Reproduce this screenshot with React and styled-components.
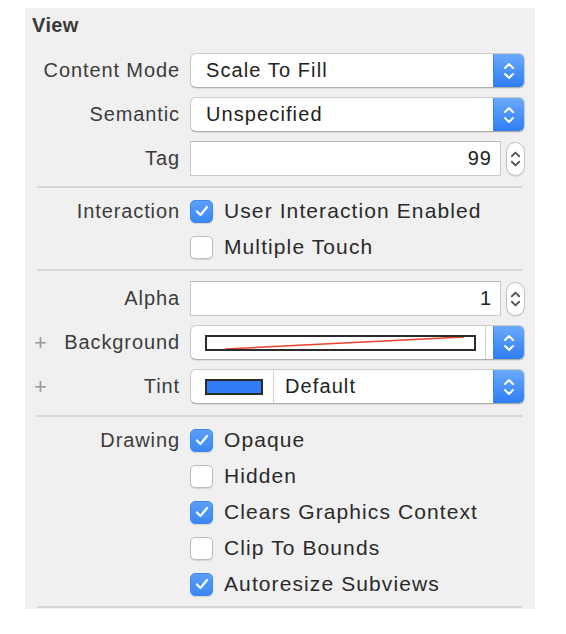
import React from 'react';
import styled, { createGlobalStyle } from 'styled-components';

const GlobalStyle = createGlobalStyle`
  body {
    margin: 0;
    background: #ffffff;
    font-family: "Liberation Sans", Arial, sans-serif;
  }
`;

const Panel = styled.div`
  margin: 8px 0 0 25px;
  width: 510px;
  background-color: #f0f0f0;
  padding-bottom: 1px;
`;

const Title = styled.div`
  padding: 6px 0 0 7px;
  height: 38px;
  box-sizing: border-box;
  font-size: 20px;
  font-weight: 700;
  color: #3a3a3a;
  letter-spacing: 0.4px;
`;

const Section = styled.div`
  display: flex;
  flex-direction: column;
  gap: ${(p) => p.gap}px;
  padding: ${(p) => p.top}px 0 ${(p) => p.bottom || 10}px;
`;

const Separator = styled.div`
  height: 2px;
  margin: 0 13px 0 12px;
  background-color: #d6d6d6;
`;

const Row = styled.div`
  display: flex;
  align-items: center;
  height: ${(p) => p.h}px;
`;

const LabelCell = styled.div`
  display: flex;
  align-items: center;
  width: 155px;
  padding-left: 9px;
  box-sizing: border-box;
  flex-shrink: 0;
`;

const Plus = styled.span`
  font-size: 22px;
  font-weight: 300;
  color: #9a9a9a;
  line-height: 1;
`;

const Label = styled.span`
  margin-left: auto;
  font-size: 20px;
  letter-spacing: 0.9px;
  color: #3c3c3c;
  white-space: nowrap;
`;

const Control = styled.div`
  display: flex;
  align-items: center;
  margin-left: 10px;
  width: 335px;
  height: 100%;
`;

const Popup = styled.div`
  display: flex;
  align-items: stretch;
  width: 100%;
  height: 100%;
  box-sizing: border-box;
  background: #ffffff;
  border: 1px solid #cbcbcb;
  border-bottom-color: #aeaeae;
  border-radius: 6px;
  box-shadow: 0 1px 0 rgba(0, 0, 0, 0.08);
  overflow: hidden;
`;

const PopupText = styled.div`
  flex: 1;
  display: flex;
  align-items: center;
  padding-left: ${(p) => p.pad}px;
  font-size: 20px;
  letter-spacing: 1.1px;
  color: #222222;
`;

const WellCell = styled.div`
  display: flex;
  align-items: center;
  padding: 0 ${(p) => p.right}px 0 14px;
  border-right: 1px solid #d4d4d4;
  flex: ${(p) => (p.grow ? 1 : 'none')};
`;

const Gap = styled.div`
  width: 7px;
  flex-shrink: 0;
`;

const ColorWell = styled.div`
  position: relative;
  flex: ${(p) => (p.w ? 'none' : 1)};
  width: ${(p) => (p.w ? `${p.w}px` : 'auto')};
  height: 16px;
  box-sizing: border-box;
  border: 2px solid #2b2b2b;
  background: ${(p) => p.color};
  overflow: hidden;
`;

const ClearLine = styled.svg`
  position: absolute;
  left: 0;
  top: 0;
  width: 100%;
  height: 100%;
`;

const Arrows = styled.div`
  display: flex;
  align-items: center;
  justify-content: center;
  flex-shrink: 0;
  width: 30px;
  background: linear-gradient(#6aaafb, #2f7df6);
  border-left: 1px solid #3b82f0;
`;

const Field = styled.div`
  display: flex;
  align-items: center;
  justify-content: flex-end;
  width: 311px;
  height: 100%;
  box-sizing: border-box;
  padding-right: 8px;
  background: #ffffff;
  border: 1px solid #c9c9c9;
  border-top-color: #bdbdbd;
  font-size: 20px;
  letter-spacing: 1px;
  color: #222222;
`;

const Stepper = styled.div`
  display: flex;
  align-items: center;
  justify-content: center;
  margin-left: 5px;
  width: 19px;
  height: 34px;
  box-sizing: border-box;
  background: #ffffff;
  border: 1px solid #c3c3c3;
  border-radius: 10px;
  box-shadow: 0 1px 0 rgba(0, 0, 0, 0.1);
`;

const Check = styled.label`
  display: flex;
  align-items: center;
  gap: 11px;
  font-size: 21px;
  letter-spacing: 1.1px;
  color: #2a2a2a;
  white-space: nowrap;
`;

const Box = styled.span`
  display: flex;
  align-items: center;
  justify-content: center;
  width: 23px;
  height: 23px;
  box-sizing: border-box;
  border-radius: 5px;
  background: ${(p) => (p.on ? 'linear-gradient(#5b9ff9, #3a87f4)' : '#ffffff')};
  border: 1px solid ${(p) => (p.on ? '#3f86ef' : '#bdbdbd')};
  box-shadow: 0 1px 1px rgba(0, 0, 0, 0.12);
`;

const Chevrons = ({ color = '#ffffff', w = 12, h = 22 }) => (
  <svg width={w} height={h} viewBox="0 0 12 22" fill="none">
    <path d="M2 8 L6 4 L10 8" stroke={color} strokeWidth="2" strokeLinecap="round" strokeLinejoin="round" />
    <path d="M2 14 L6 18 L10 14" stroke={color} strokeWidth="2" strokeLinecap="round" strokeLinejoin="round" />
  </svg>
);

const Tick = () => (
  <svg width="14" height="12" viewBox="0 0 14 12" fill="none">
    <path d="M2 6.5 L5.5 10 L12 2" stroke="#ffffff" strokeWidth="2.2" strokeLinecap="round" strokeLinejoin="round" />
  </svg>
);

const LabeledRow = ({ label, plus, h = 35, children }) => (
  <Row h={h}>
    <LabelCell>
      {plus && <Plus>+</Plus>}
      <Label>{label}</Label>
    </LabelCell>
    <Control>{children}</Control>
  </Row>
);

const CheckRow = ({ label, text, on }) => (
  <LabeledRow label={label} h={24}>
    <Check>
      <Box on={on}>{on && <Tick />}</Box>
      {text}
    </Check>
  </LabeledRow>
);

const SelectPopup = ({ value }) => (
  <Popup>
    <PopupText pad={15}>{value}</PopupText>
    <Arrows>
      <Chevrons />
    </Arrows>
  </Popup>
);

const NumberField = ({ value }) => (
  <>
    <Field>{value}</Field>
    <Stepper>
      <Chevrons color="#555555" w={11} h={22} />
    </Stepper>
  </>
);

const App = () => {
  return (
    <>
      <GlobalStyle />
      <Panel>
        <Title>View</Title>
        <Section top={7} gap={9}>
          <LabeledRow label="Content Mode">
            <SelectPopup value="Scale To Fill" />
          </LabeledRow>
          <LabeledRow label="Semantic">
            <SelectPopup value="Unspecified" />
          </LabeledRow>
          <LabeledRow label="Tag">
            <NumberField value="99" />
          </LabeledRow>
        </Section>
        <Separator />
        <Section top={11} gap={12}>
          <CheckRow label="Interaction" text="User Interaction Enabled" on />
          <CheckRow text="Multiple Touch" />
        </Section>
        <Separator />
        <Section top={10} gap={9} bottom={11}>
          <LabeledRow label="Alpha">
            <NumberField value="1" />
          </LabeledRow>
          <LabeledRow label="Background" plus>
            <Popup>
              <WellCell grow right={9}>
                <ColorWell color="#ffffff">
                  <ClearLine viewBox="0 0 268 12" preserveAspectRatio="none">
                    <path d="M18 12 L258 0" stroke="#e8432a" strokeWidth="1.6" />
                  </ClearLine>
                </ColorWell>
              </WellCell>
              <Gap />
              <Arrows>
                <Chevrons />
              </Arrows>
            </Popup>
          </LabeledRow>
          <LabeledRow label="Tint" plus>
            <Popup>
              <WellCell right={10}>
                <ColorWell w={58} color="#2f7cf6" />
              </WellCell>
              <PopupText pad={11}>Default</PopupText>
              <Arrows>
                <Chevrons />
              </Arrows>
            </Popup>
          </LabeledRow>
        </Section>
        <Separator />
        <Section top={11} gap={12}>
          <CheckRow label="Drawing" text="Opaque" on />
          <CheckRow text="Hidden" />
          <CheckRow text="Clears Graphics Context" on />
          <CheckRow text="Clip To Bounds" />
          <CheckRow text="Autoresize Subviews" on />
        </Section>
        <Separator />
      </Panel>
    </>
  );
};

export default App;
